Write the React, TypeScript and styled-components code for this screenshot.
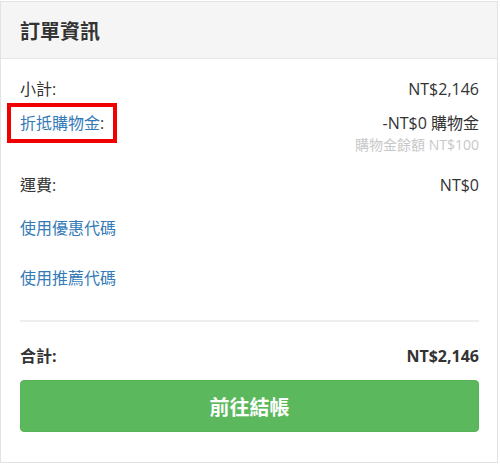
import React from 'react'
import styled, { createGlobalStyle } from 'styled-components'

const GlobalStyle = createGlobalStyle`
  body {
    margin: 0;
    background: #ffffff;
    font-family: "Open Sans", "Noto Sans CJK TC", sans-serif;
    color: #333333;
  }
`

const Panel = styled.div`
  width: 498px;
  height: 462px;
  box-sizing: border-box;
  margin-top: 1px;
  border: 1px solid #e3e3e3;
  display: flex;
  flex-direction: column;
`
const Heading = styled.div`
  height: 56px;
  background: #f5f5f5;
  border-bottom: 1px solid #e6e6e6;
  display: flex;
  align-items: center;
  padding-left: 19px;
  font-size: 20px;
  font-weight: 600;
  color: #333;
`
const Body = styled.div`
  flex: 1;
  display: flex;
  flex-direction: column;
  padding: 19px 18px 0 19px;
`
const Row = styled.div<{ $gap?: number; $bold?: boolean }>`
  display: flex;
  flex-direction: row;
  justify-content: space-between;
  align-items: flex-start;
  margin-top: ${p => p.$gap ?? 0}px;
  font-size: 16px;
  line-height: 22px;
  font-weight: ${p => (p.$bold ? 700 : 400)};
`
const Label = styled.span``
const LinkLabel = styled.a<{ $marked?: boolean }>`
  position: relative;
  display: inline-block;
  color: #337ab7;
  text-decoration: none;
  cursor: pointer;
  ${p =>
    p.$marked &&
    `
    &::after {
      content: '';
      position: absolute;
      left: -13px;
      right: -17px;
      top: -9px;
      bottom: -9px;
      border: 4px solid #f00000;
    }
  `}
`
const Colon = styled.span`
  color: #333;
`
const Value = styled.div`
  display: flex;
  flex-direction: column;
  align-items: flex-end;
`
const Hint = styled.span`
  margin-top: 1px;
  font-size: 14px;
  line-height: 20px;
  color: #c8c8c8;
`
const Divider = styled.hr`
  margin: 31px 0 0;
  border: 0;
  height: 2px;
  background: #eeeeee;
`
const CheckoutButton = styled.button`
  margin-top: 13px;
  height: 52px;
  border: 1px solid #56b356;
  border-radius: 4px;
  background: #5cb85c;
  color: #ffffff;
  font-family: "Open Sans", "Noto Sans CJK TC", sans-serif;
  font-size: 20px;
  font-weight: 600;
  cursor: pointer;
`

export default function App() {
  return (
    <>
      <GlobalStyle />
      <Panel>
        <Heading>訂單資訊</Heading>
        <Body>
          <Row>
            <Label>小計:</Label>
            <span>NT$2,146</span>
          </Row>
          <Row $gap={12}>
            <span>
              <LinkLabel $marked>折抵購物金</LinkLabel>
              <Colon>:</Colon>
            </span>
            <Value>
              <span>-NT$0 購物金</span>
              <Hint>購物金餘額 NT$100</Hint>
            </Value>
          </Row>
          <Row $gap={19}>
            <Label>運費:</Label>
            <span>NT$0</span>
          </Row>
          <Row $gap={21}>
            <LinkLabel>使用優惠代碼</LinkLabel>
          </Row>
          <Row $gap={28}>
            <LinkLabel>使用推薦代碼</LinkLabel>
          </Row>
          <Divider />
          <Row $gap={23} $bold>
            <Label>合計:</Label>
            <span>NT$2,146</span>
          </Row>
          <CheckoutButton>前往結帳</CheckoutButton>
        </Body>
      </Panel>
    </>
  )
}
